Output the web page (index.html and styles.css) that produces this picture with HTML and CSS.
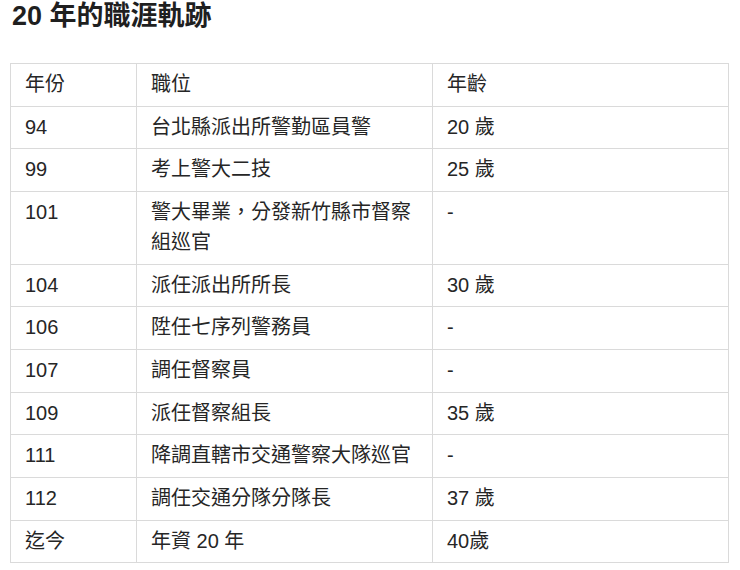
FILE: index.html
```html
<!DOCTYPE html>
<html lang="zh-Hant">
<head>
<meta charset="utf-8">
<title>20 年的職涯軌跡</title>
<link rel="stylesheet" href="styles.css">
</head>
<body>
<main class="page">
  <h2 class="title">20 年的職涯軌跡</h2>
  <table class="career">
    <colgroup>
      <col class="c-year">
      <col class="c-pos">
      <col class="c-age">
    </colgroup>
    <thead>
      <tr><th>年份</th><th>職位</th><th>年齡</th></tr>
    </thead>
    <tbody>
      <tr><td>94</td><td>台北縣派出所警勤區員警</td><td>20 歲</td></tr>
      <tr><td>99</td><td>考上警大二技</td><td>25 歲</td></tr>
      <tr><td>101</td><td>警大畢業，分發新竹縣市督察組巡官</td><td>-</td></tr>
      <tr><td>104</td><td>派任派出所所長</td><td>30 歲</td></tr>
      <tr><td>106</td><td>陞任七序列警務員</td><td>-</td></tr>
      <tr><td>107</td><td>調任督察員</td><td>-</td></tr>
      <tr><td>109</td><td>派任督察組長</td><td>35 歲</td></tr>
      <tr><td>111</td><td>降調直轄市交通警察大隊巡官</td><td>-</td></tr>
      <tr><td>112</td><td>調任交通分隊分隊長</td><td>37 歲</td></tr>
      <tr><td>迄今</td><td>年資 20 年</td><td>40歲</td></tr>
    </tbody>
  </table>
</main>
</body>
</html>
```

FILE: styles.css
```css
html, body {
  margin: 0;
  padding: 0;
  background: #ffffff;
}

body {
  font-family: "Liberation Sans", "Noto Sans CJK TC", sans-serif;
  color: #262626;
}

.page {
  padding: 0 0 0 10px;
}

.title {
  margin: 0 0 31px 0;
  padding-left: 2px;
  font-size: 27px;
  line-height: 32px;
  font-weight: 700;
  color: #1f1f1f;
}

.career {
  width: 718px;
  border-collapse: collapse;
  table-layout: fixed;
  font-size: 20px;
  line-height: 29.7px;
  border: 1px solid #dadada;
}

.c-year { width: 126px; }
.c-pos { width: 296px; }
.c-age { width: 296px; }

.career th,
.career td {
  border: 1px solid #dadada;
  padding: 6px 13px 6px 14px;
  text-align: left;
  vertical-align: top;
  font-weight: 400;
}
```
